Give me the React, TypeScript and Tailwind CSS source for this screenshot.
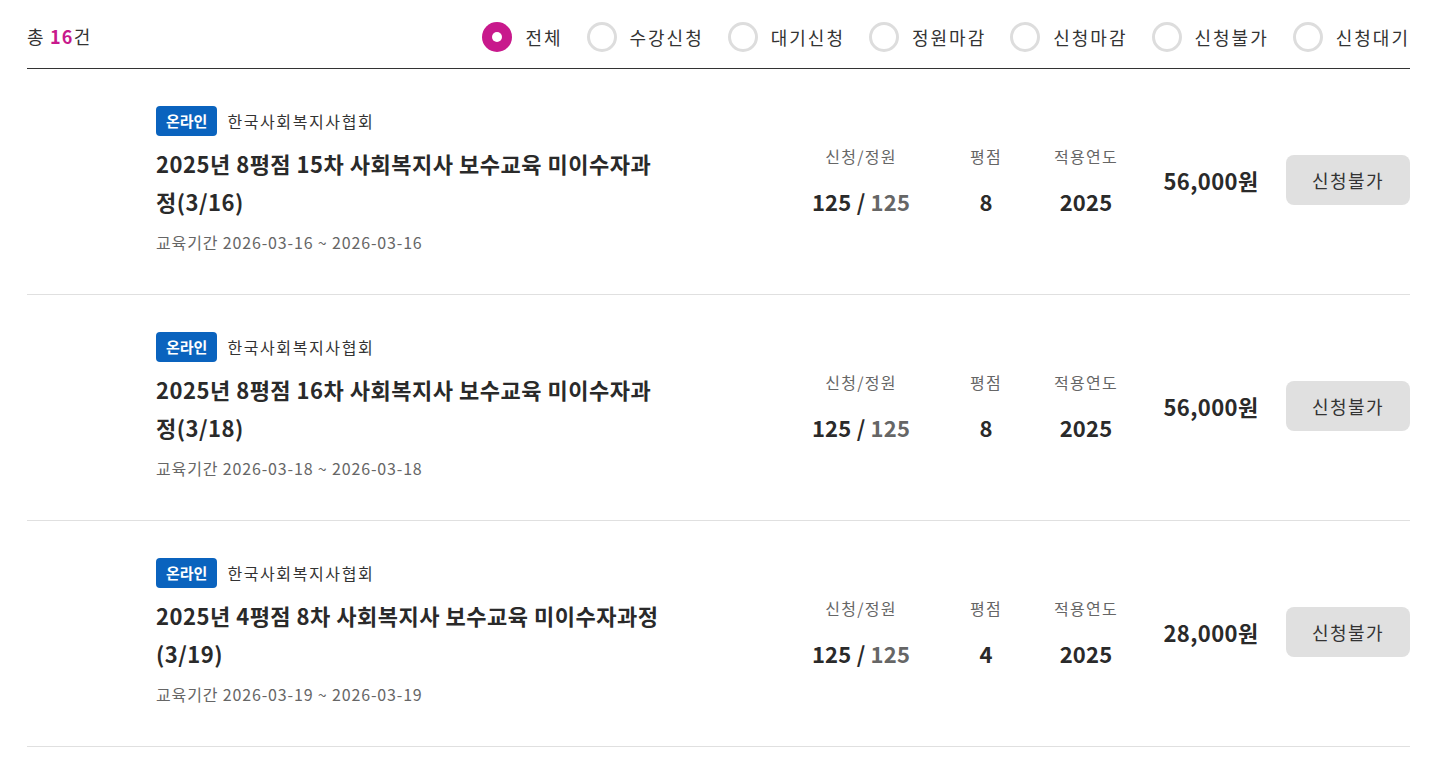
import { useState } from 'react'

const filters = ['전체', '수강신청', '대기신청', '정원마감', '신청마감', '신청불가', '신청대기']

const courses = [
  {
    title: '2025년 8평점 15차 사회복지사 보수교육 미이수자과정(3/16)',
    period: '2026-03-16 ~ 2026-03-16',
    applied: 125,
    capacity: 125,
    credit: 8,
    year: 2025,
    price: '56,000원',
  },
  {
    title: '2025년 8평점 16차 사회복지사 보수교육 미이수자과정(3/18)',
    period: '2026-03-18 ~ 2026-03-18',
    applied: 125,
    capacity: 125,
    credit: 8,
    year: 2025,
    price: '56,000원',
  },
  {
    title: '2025년 4평점 8차 사회복지사 보수교육 미이수자과정(3/19)',
    period: '2026-03-19 ~ 2026-03-19',
    applied: 125,
    capacity: 125,
    credit: 4,
    year: 2025,
    price: '28,000원',
  },
]

function Radio({ label, checked, onClick }: { label: string; checked: boolean; onClick: () => void }) {
  return (
    <button className="flex items-center gap-[13px]" onClick={onClick}>
      {checked ? (
        <span className="w-[30px] h-[30px] rounded-full bg-[#c8198c] flex items-center justify-center">
          <span className="w-[10px] h-[10px] rounded-full bg-white" />
        </span>
      ) : (
        <span className="w-[30px] h-[30px] rounded-full border-[3px] border-[#dddddd] bg-white" />
      )}
      <span className="text-[18px] tracking-[2px] text-[#333] leading-none">{label}</span>
    </button>
  )
}

export default function App() {
  const [filter, setFilter] = useState('전체')

  return (
    <div
      className="bg-white min-h-screen pl-[27px] pr-[45px] text-[#222]"
      style={{ fontFamily: '"Noto Sans CJK KR", "Noto Sans", sans-serif' }}
    >
      {/* Header */}
      <div className="h-[69px] pt-[5px] flex items-center justify-between border-b border-[#333]">
        <p className="text-[18px] tracking-[1.2px] text-[#333]">
          총 <b className="text-[#c8198c] font-bold">16</b>건
        </p>
        <div className="flex items-center gap-[24px]">
          {filters.map((f) => (
            <Radio key={f} label={f} checked={filter === f} onClick={() => setFilter(f)} />
          ))}
        </div>
      </div>

      {/* Course list */}
      <ul>
        {courses.map((c) => (
          <li key={c.title} className="flex items-center pl-[129px] pt-[37px] pb-[40px] border-b border-[#e0e0e0]">
            <div className="w-[505px]">
              <div className="flex items-center gap-[10px]">
                <span className="h-[30px] px-[10px] rounded-[4px] bg-[#0a63be] text-white text-[15px] font-bold flex items-center">
                  온라인
                </span>
                <span className="text-[16px] tracking-[1.6px] text-[#333]">한국사회복지사협회</span>
              </div>
              <h3 className="mt-[8px] text-[22px] leading-[38px] tracking-[0.5px] font-bold text-[#2a2a2a]">
                {c.title}
              </h3>
              <p className="mt-[10px] text-[16px] leading-[24px] tracking-[0.85px] text-[#666]">교육기간 {c.period}</p>
            </div>

            <div className="flex-1" />

            <div className="w-[130px] text-center">
              <p className="text-[16px] leading-[22px] tracking-[1.3px] text-[#666]">신청/정원</p>
              <p className="mt-[19px] text-[22px] leading-[30px] tracking-[0.2px] font-bold text-[#2a2a2a]">
                {c.applied} / <span className="text-[#666]">{c.capacity}</span>
              </p>
            </div>
            <div className="ml-[10px] w-[100px] text-center">
              <p className="text-[16px] leading-[22px] tracking-[1.3px] text-[#666]">평점</p>
              <p className="mt-[19px] text-[22px] leading-[30px] font-bold text-[#2a2a2a]">{c.credit}</p>
            </div>
            <div className="w-[100px] text-center">
              <p className="text-[16px] leading-[22px] tracking-[1.3px] text-[#666]">적용연도</p>
              <p className="mt-[19px] text-[22px] leading-[30px] tracking-[0.2px] font-bold text-[#2a2a2a]">{c.year}</p>
            </div>
            <p className="ml-[20px] w-[110px] text-center text-[22px] tracking-[0.4px] font-bold text-[#2a2a2a]">
              {c.price}
            </p>
            <button className="ml-[20px] w-[124px] h-[50px] rounded-[8px] bg-[#e0e0e0] text-[18px] tracking-[1.5px] text-[#333]">
              신청불가
            </button>
          </li>
        ))}
      </ul>
    </div>
  )
}
